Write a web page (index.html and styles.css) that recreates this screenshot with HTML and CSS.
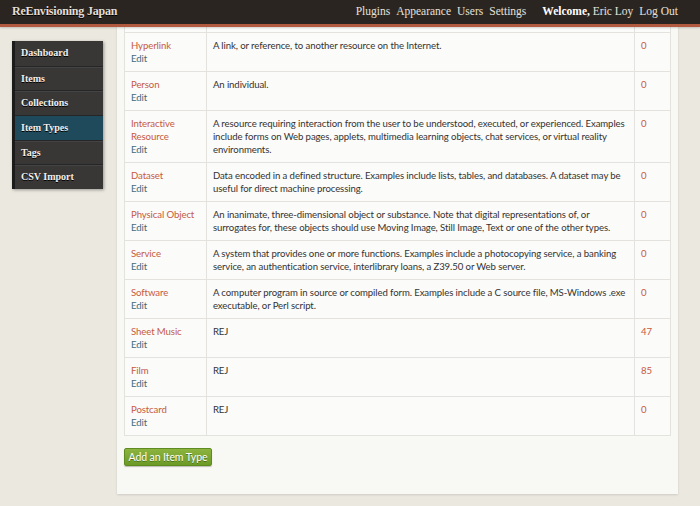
FILE: index.html
```html
<!DOCTYPE html>
<html>
<head>
<meta charset="utf-8">
<link rel="stylesheet" href="styles.css">
</head>
<body>
<header class="topbar">
  <div class="site-title">ReEnvisioning Japan</div>
  <nav class="global-nav">
    <a href="#">Plugins</a>
    <a href="#">Appearance</a>
    <a href="#">Users</a>
    <a href="#">Settings</a>
    <span class="welcome"><b>Welcome,</b> <a href="#">Eric Loy</a></span>
    <a href="#">Log Out</a>
  </nav>
</header>
<div class="layout">
  <ul class="sidebar">
    <li>Dashboard</li>
    <li>Items</li>
    <li>Collections</li>
    <li class="active">Item Types</li>
    <li>Tags</li>
    <li>CSV Import</li>
  </ul>
  <main class="panel">
    <table class="types">
      <thead><tr><th></th><th></th><th></th></tr></thead>
      <tbody>
        <tr><td class="name"><a class="title">Hyperlink</a><a class="edit">Edit</a></td><td class="desc">A link, or reference, to another resource on the Internet.</td><td class="count">0</td></tr>
        <tr><td class="name"><a class="title">Person</a><a class="edit">Edit</a></td><td class="desc">An individual.</td><td class="count">0</td></tr>
        <tr><td class="name"><a class="title">Interactive Resource</a><a class="edit">Edit</a></td><td class="desc">A resource requiring interaction from the user to be understood, executed, or experienced. Examples include forms on Web pages, applets, multimedia learning objects, chat services, or virtual reality environments.</td><td class="count">0</td></tr>
        <tr><td class="name"><a class="title">Dataset</a><a class="edit">Edit</a></td><td class="desc">Data encoded in a defined structure. Examples include lists, tables, and databases. A dataset may be useful for direct machine processing.</td><td class="count">0</td></tr>
        <tr><td class="name"><a class="title">Physical Object</a><a class="edit">Edit</a></td><td class="desc">An inanimate, three-dimensional object or substance. Note that digital representations of, or surrogates for, these objects should use Moving Image, Still Image, Text or one of the other types.</td><td class="count">0</td></tr>
        <tr><td class="name"><a class="title">Service</a><a class="edit">Edit</a></td><td class="desc">A system that provides one or more functions. Examples include a photocopying service, a banking service, an authentication service, interlibrary loans, a Z39.50 or Web server.</td><td class="count">0</td></tr>
        <tr><td class="name"><a class="title">Software</a><a class="edit">Edit</a></td><td class="desc">A computer program in source or compiled form. Examples include a C source file, MS&#8209;Windows .exe executable, or Perl script.</td><td class="count">0</td></tr>
        <tr><td class="name"><a class="title">Sheet Music</a><a class="edit">Edit</a></td><td class="desc">REJ</td><td class="count">47</td></tr>
        <tr><td class="name"><a class="title">Film</a><a class="edit">Edit</a></td><td class="desc">REJ</td><td class="count">85</td></tr>
        <tr><td class="name"><a class="title">Postcard</a><a class="edit">Edit</a></td><td class="desc">REJ</td><td class="count">0</td></tr>
      </tbody>
    </table>
    <a class="add-btn" href="#">Add an Item Type</a>
  </main>
</div>
</body>
</html>
```

FILE: styles.css
```css
* { box-sizing: border-box; }
html, body { margin: 0; padding: 0; }
body {
  width: 700px;
  height: 506px;
  overflow: hidden;
  background: #eae8df;
  font-family: Lato, "Open Sans", sans-serif;
}
a { text-decoration: none; cursor: pointer; }

.topbar {
  height: 27px;
  background: #2b2521;
  border-bottom: 3px solid #b15a3f;
  box-shadow: 0 1px 2px rgba(0,0,0,0.18);
  display: flex;
  align-items: center;
  justify-content: space-between;
  padding: 0 22px 2px 12px;
  font-family: "Liberation Serif", "DejaVu Serif", serif;
  color: #e9e4dc;
  position: relative;
  z-index: 2;
}
.site-title {
  font-size: 12px;
  font-weight: bold;
  letter-spacing: -0.2px;
  color: #e3ded6;
  text-shadow: 0 1px 0 #000;
}
.global-nav {
  display: flex;
  gap: 6px;
  font-size: 11.5px;
}
.global-nav a { color: #e6e1d9; }
.global-nav .welcome { margin-left: 10px; }
.global-nav .welcome b { color: #fff; }

.layout {
  display: flex;
  align-items: flex-start;
}

.sidebar {
  list-style: none;
  margin: 14px 0 0 12px;
  padding: 0;
  width: 91px;
  background: #383736;
  border-left: 3px solid #1b1b1b;
  box-shadow: 1px 1px 3px rgba(0,0,0,0.35);
  font-family: "Liberation Serif", "DejaVu Serif", serif;
  font-weight: bold;
  font-size: 10px;
  color: #f2f0ec;
}
.sidebar li {
  height: 24.7px;
  line-height: 24px;
  padding-left: 6px;
  border-top: 1px solid #262626;
  box-shadow: inset 0 1px 0 #444;
  text-shadow: 0 1px 0 #000;
}
.sidebar li:first-child { border-top: none; box-shadow: none; }
.sidebar li.active { background: #1e4a5b; box-shadow: none; }

.panel {
  margin-left: 14px;
  width: 561px;
  background: #f8f8f4;
  padding: 0 7px 28px 7px;
  box-shadow: 0 1px 2px rgba(0,0,0,0.12);
  margin-top: -3px;
}

.types {
  width: 547px;
  border-collapse: collapse;
  background: #fbfbf9;
  font-size: 9.6px;
  letter-spacing: -0.1px;
  line-height: 13px;
  color: #333;
}
.types th {
  height: 8px;
  padding: 0;
  border: 1px solid #e3e2de;
  border-top: none;
}
.types td {
  border: 1px solid #e3e2de;
  vertical-align: top;
  padding: 6px 6px 6px 6px;
}
.types td.name { width: 82px; padding-left: 6px; padding-right: 3px; }
.types td.desc { width: 429px; padding-right: 2px; }
.types td.count { width: 36px; color: #c65a3e; }
.types .title { display: block; color: #c65a3e; }
.types .edit { display: block; color: #3f6b7d; }

.add-btn {
  display: inline-block;
  margin-top: 12px;
  height: 18px;
  width: 88px;
  line-height: 16px;
  text-align: center;
  font-size: 10.5px;
  letter-spacing: -0.1px;
  color: #fff;
  background: linear-gradient(#8cb43f, #6b9a26);
  border: 1px solid #5e8b22;
  border-radius: 2px;
  text-shadow: 0 1px 0 rgba(0,0,0,0.35);
  box-shadow: 0 1px 1px rgba(0,0,0,0.25);
}
```
